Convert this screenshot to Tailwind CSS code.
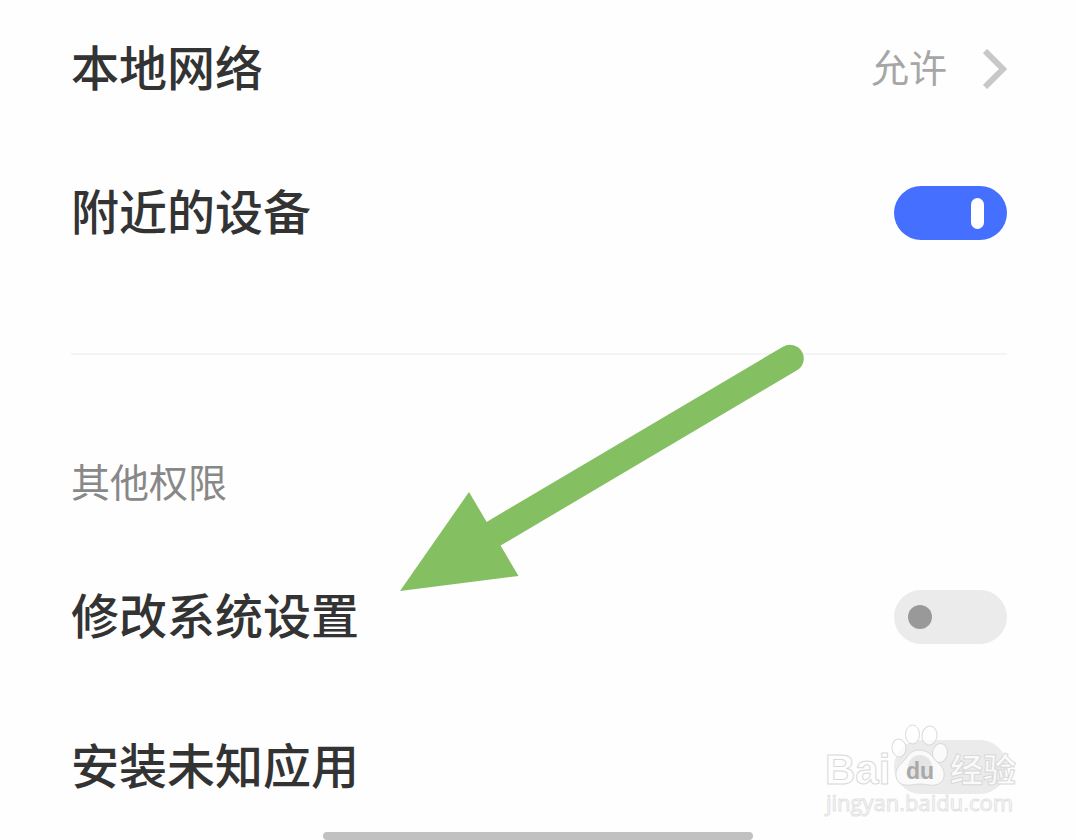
<!DOCTYPE html>
<html lang="zh-CN">
<head>
    <meta charset="UTF-8">
    <meta name="viewport" content="width=device-width, initial-scale=1.0">
    <title>权限</title>
    <script src="https://cdn.jsdelivr.net/npm/@tailwindcss/browser@4"></script>
</head>
<body class="min-h-screen bg-[#fefefe] font-['Noto_Sans_CJK_SC',sans-serif] text-[#333333]">
    <main class="relative min-h-screen pl-[71px] pr-[69px] pt-9">
        <div class="flex flex-col gap-[78px]">
            <button type="button" class="flex h-[66px] w-full items-center justify-between text-left">
                <span class="pb-2 text-5xl font-medium">本地网络</span>
                <span class="flex items-center gap-9">
                    <span class="pb-2 text-[38px] text-[#a6a6a6]">允许</span>
                    <svg class="h-10 w-6" viewBox="0 0 24 40" fill="none" stroke="#c8c8c8" stroke-width="6" aria-hidden="true">
                        <path d="M2 2 20 20 2 38"/>
                    </svg>
                </span>
            </button>
            <div class="flex h-[66px] items-center justify-between">
                <label for="nearby" class="pb-2 text-5xl font-medium">附近的设备</label>
                <input id="nearby" type="checkbox" role="switch" checked class="flex h-[54px] w-[113px] appearance-none items-center rounded-full bg-[#ebebeb] px-[14px] before:size-6 before:rounded-full before:bg-[#999999] checked:justify-end checked:bg-[#456fff] checked:px-[23px] checked:before:h-[31px] checked:before:w-[13px] checked:before:bg-white">
            </div>
        </div>

        <hr class="mt-[107px] border-t-2 border-[#f4f4f4]">

        <h2 class="mt-24 text-[39px] leading-[58px] text-[#888888]">其他权限</h2>
        <div class="mt-[75px] flex flex-col gap-[84px]">
            <div class="flex h-[66px] items-center justify-between">
                <label for="system" class="pb-2 text-5xl font-medium">修改系统设置</label>
                <input id="system" type="checkbox" role="switch" class="flex h-[54px] w-[113px] appearance-none items-center rounded-full bg-[#ebebeb] px-[14px] before:size-6 before:rounded-full before:bg-[#999999] checked:justify-end checked:bg-[#456fff] checked:px-[23px] checked:before:h-[31px] checked:before:w-[13px] checked:before:bg-white">
            </div>
            <div class="flex h-[66px] items-center justify-between">
                <label for="unknown" class="pb-2 text-5xl font-medium">安装未知应用</label>
                <input id="unknown" type="checkbox" role="switch" class="flex h-[54px] w-[113px] appearance-none items-center rounded-full bg-[#ebebeb] px-[14px] before:size-6 before:rounded-full before:bg-[#999999] checked:justify-end checked:bg-[#456fff] checked:px-[23px] checked:before:h-[31px] checked:before:w-[13px] checked:before:bg-white">
            </div>
        </div>

        <!-- Pointer arrow -->
        <svg class="pointer-events-none absolute left-[400px] top-[344px] h-[248px] w-[405px]" viewBox="400 344 405 248" aria-hidden="true">
            <path d="M494 533.500 790 358.500" stroke="#84bf61" stroke-width="27.500" stroke-linecap="round"/>
            <path d="M400 591 469 492 518.500 576Z" fill="#84bf61"/>
        </svg>

        <!-- Watermark -->
        <svg class="pointer-events-none absolute right-[51px] top-[720px] h-[104px] w-[205px] overflow-visible" viewBox="820 720 205 104" role="img" aria-label="Baidu 经验">
            <g fill="#ffffff" fill-opacity="0.75" stroke="#d9d9d9" stroke-width="1">
                <text x="825" y="784" font-family="Liberation Sans, sans-serif" font-weight="700" font-size="42">Bai</text>
                <ellipse cx="899" cy="748" rx="7" ry="9" transform="rotate(-8 899 748)"/>
                <ellipse cx="912.500" cy="734.500" rx="7" ry="9.500"/>
                <ellipse cx="929.500" cy="735.500" rx="7.500" ry="9.500" transform="rotate(8 929.500 735.500)"/>
                <ellipse cx="940" cy="753" rx="7.500" ry="9.500" transform="rotate(8 940 753)"/>
                <path d="M919 750c-6 0-9 3-12 7-3 5-8 7-10 12-3 7 0 15 8 16 6 1 9-1 15-1s9 2 15 1c8-1 11-9 8-16-2-5-7-7-10-12-3-4-8-7-14-7Z"/>
                <text x="950" y="782" font-family="Noto Sans CJK SC, sans-serif" font-weight="700" font-size="33">经验</text>
                <text x="826" y="811" font-family="Open Sans, sans-serif" font-size="22" stroke="#e2e2e2">jingyan.baidu.com</text>
            </g>
            <text x="906" y="779" font-family="Liberation Sans, sans-serif" font-weight="700" font-size="23" fill="#a9a9a9">du</text>
        </svg>
    </main>
    <div class="fixed inset-x-0 bottom-0 mx-auto h-2 w-[40%] rounded-full bg-[#c1c1c1]"></div>
</body>
</html>
